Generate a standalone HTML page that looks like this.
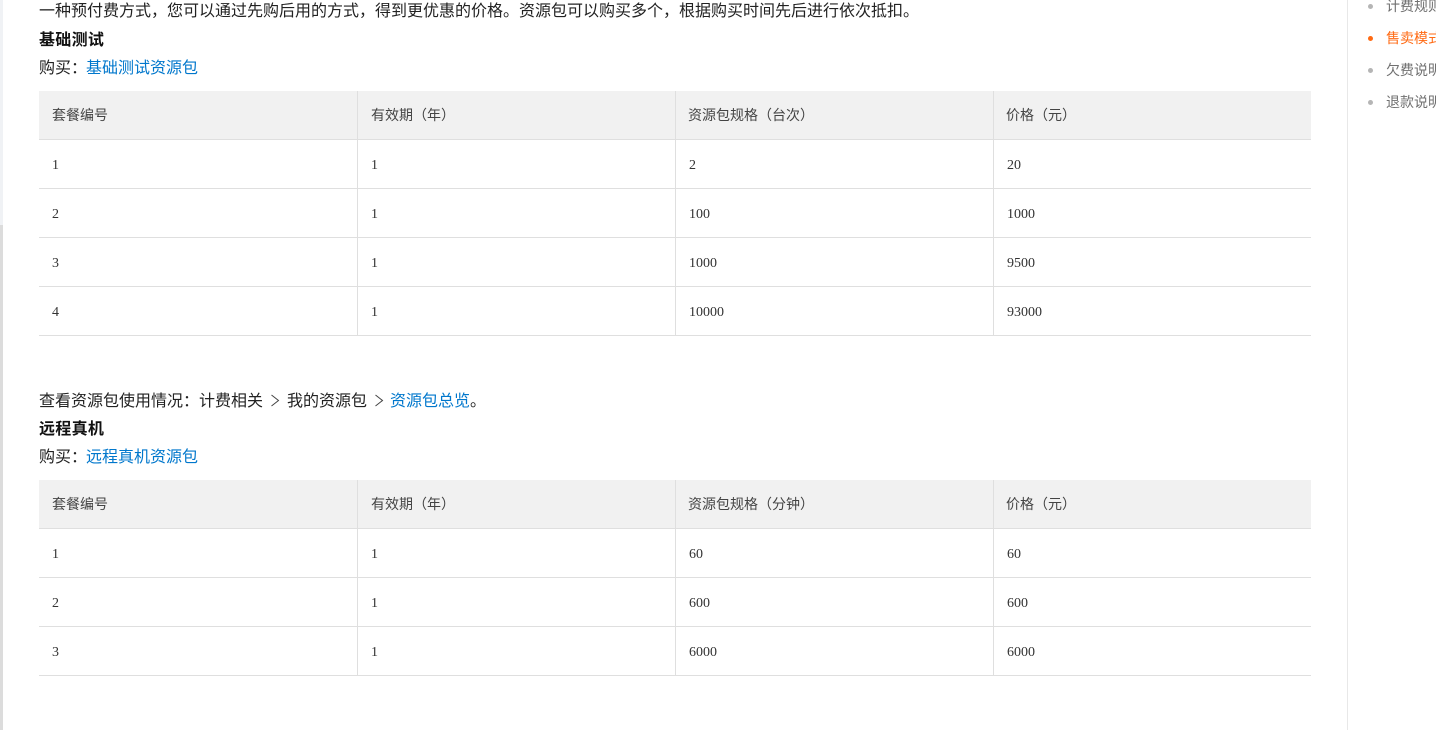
<!DOCTYPE html>
<html lang="zh">
<head>
<meta charset="utf-8">
<style>
html,body{margin:0;padding:0;background:#fff}
body{width:1436px;height:730px;position:relative;overflow:hidden;font-family:"Liberation Sans","WenQuanYi Zen Hei","Noto Sans CJK SC",sans-serif;color:#222}
.t{position:absolute;white-space:nowrap;font-size:16px;line-height:24px;color:#222}
.t a,a.t{color:#0077cc;text-decoration:none}
.b{font-weight:bold;color:#111}
table{position:absolute;left:39px;width:1272px;border-collapse:separate;border-spacing:0;table-layout:fixed;font-size:14px;color:#333}
th{height:48px;background:#f1f1f1;font-weight:normal;text-align:left;padding:0 0 0 13px;border-bottom:1px solid #dfdfdf;border-right:1px solid #dfdfdf;box-sizing:content-box;font-size:14px;color:#444}
td{padding:4px 0 0 13px;box-sizing:border-box;height:49px;border-bottom:1px solid #dfdfdf;border-right:1px solid #dfdfdf;font-family:"Liberation Serif",serif;font-size:14px;color:#333}
th:nth-child(n+3){padding-left:12px}
th:last-child,td:last-child{border-right:0}
.side{position:absolute;left:1386px;white-space:nowrap;font-size:14px;line-height:20px;color:#707070;width:50px;overflow:hidden}
.dot{position:absolute;left:1368px;width:5px;height:5px;border-radius:50%;background:#b5b5b5}
.chev{position:absolute;top:394px}
</style>
</head>
<body>
<div style="position:absolute;left:0;top:0;width:3px;height:225px;background:#f0f2f5"></div>
<div style="position:absolute;left:0;top:225px;width:3px;height:505px;background:#dcdcdc"></div>
<div style="position:absolute;left:1347px;top:0;width:1px;height:730px;background:#e8e8e8"></div>

<div class="t" style="left:39px;top:0">一种预付费方式，您可以通过先购后用的方式，得到更优惠的价格。资源包可以购买多个，根据购买时间先后进行依次抵扣。</div>
<div class="t b" style="left:39px;top:29px;letter-spacing:.3px">基础测试</div>
<div class="t" style="left:39px;top:57px">购买：</div>
<a class="t" style="left:86px;top:57px">基础测试资源包</a>

<table style="top:91px">
<colgroup><col style="width:319px"><col style="width:318px"><col style="width:318px"><col style="width:317px"></colgroup>
<tr><th>套餐编号</th><th>有效期（年）</th><th>资源包规格（台次）</th><th>价格（元）</th></tr>
<tr><td>1</td><td>1</td><td>2</td><td>20</td></tr>
<tr><td>2</td><td>1</td><td>100</td><td>1000</td></tr>
<tr><td>3</td><td>1</td><td>1000</td><td>9500</td></tr>
<tr><td>4</td><td>1</td><td>10000</td><td>93000</td></tr>
</table>

<div class="t" style="left:39px;top:390px">查看资源包使用情况：计费相关</div>
<svg class="chev" style="left:270px" width="10" height="13" viewBox="0 0 10 13"><path d="M1.5 1 L8.5 6.5 L1.5 12" fill="none" stroke="#444" stroke-width="1"/></svg>
<div class="t" style="left:287px;top:390px">我的资源包</div>
<svg class="chev" style="left:374px" width="10" height="13" viewBox="0 0 10 13"><path d="M1.5 1 L8.5 6.5 L1.5 12" fill="none" stroke="#444" stroke-width="1"/></svg>
<a class="t" style="left:390px;top:390px">资源包总览</a>
<div class="t" style="left:470px;top:390px">。</div>
<div class="t b" style="left:39px;top:418px;letter-spacing:.3px">远程真机</div>
<div class="t" style="left:39px;top:446px">购买：</div>
<a class="t" style="left:86px;top:446px">远程真机资源包</a>

<table style="top:480px">
<colgroup><col style="width:319px"><col style="width:318px"><col style="width:318px"><col style="width:317px"></colgroup>
<tr><th>套餐编号</th><th>有效期（年）</th><th>资源包规格（分钟）</th><th>价格（元）</th></tr>
<tr><td>1</td><td>1</td><td>60</td><td>60</td></tr>
<tr><td>2</td><td>1</td><td>600</td><td>600</td></tr>
<tr><td>3</td><td>1</td><td>6000</td><td>6000</td></tr>
</table>

<div class="dot" style="top:4px"></div>
<div class="side" style="top:-4px">计费规则</div>
<div class="dot" style="top:36px;background:#ff6a13"></div>
<div class="side" style="top:28px;color:#ff6a13">售卖模式</div>
<div class="dot" style="top:68px"></div>
<div class="side" style="top:60px">欠费说明</div>
<div class="dot" style="top:100px"></div>
<div class="side" style="top:92px">退款说明</div>
</body>
</html>
